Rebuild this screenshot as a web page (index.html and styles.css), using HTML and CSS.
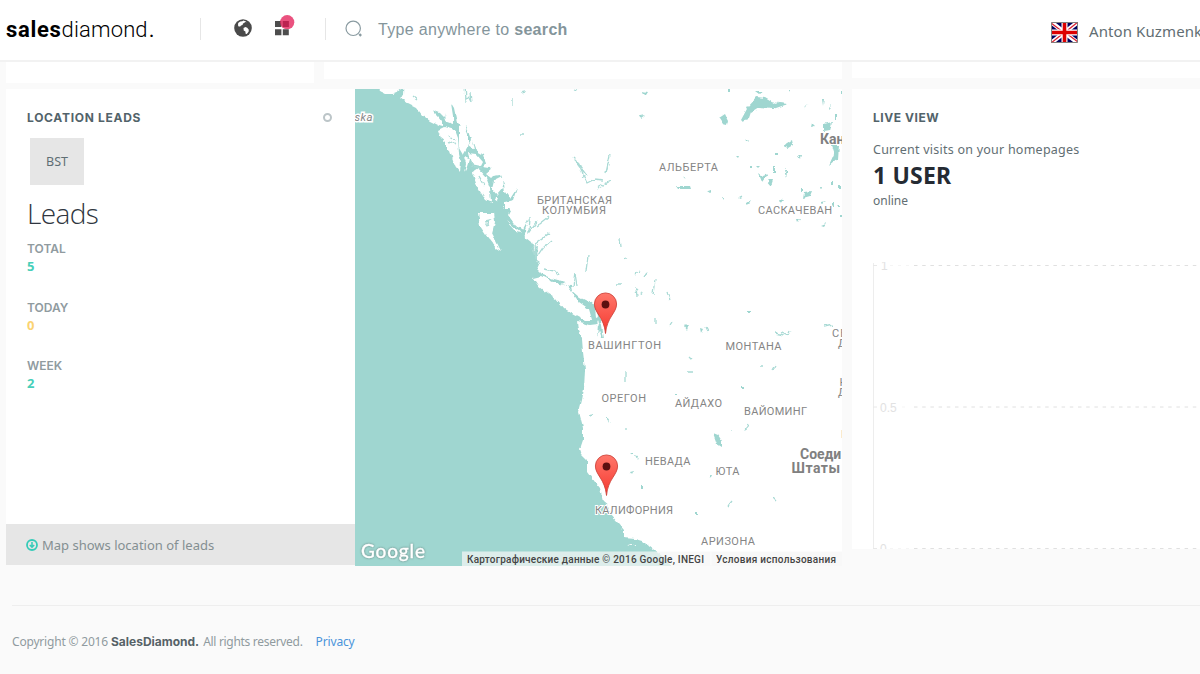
FILE: index.html
```html
<!DOCTYPE html>
<html lang="en">
<head>
<meta charset="utf-8">
<title>SalesDiamond</title>
<link rel="stylesheet" href="styles.css">
</head>
<body>
<header class="topbar">
  <div class="logo"><b>sales</b><span class="logo-light">diamond</span><span class="logo-dot">.</span></div>
  <i class="divider divider-first"></i>
  <svg class="globe" width="18" height="18" viewBox="0 0 18 18"><circle cx="9" cy="9" r="8.8" fill="#4a4a4a"/><path d="M4.2 4.1 6.2 2.6 8.3 2.2 9.5 1.5 11.8 2.4 12.6 3.3 11 3 10.5 3.8 9 4.5 8.5 6 7 6.5 6.2 7.6 4.6 7.4 4 6.2Z M9.5 9 11.5 8.1 13.2 8.8 14.8 10.8 14.6 12.8 12.8 15.1 11.6 14.7 11.4 12.6 9.7 11.6Z" fill="#fff"/></svg>
  <svg class="apps" width="22" height="24" viewBox="0 0 22 24"><path d="M1 7h6.400v6H1zM8.800 7h6v6h-6zM1 15.200h6.400v6H1zM8.800 15.200h6v6h-6z" fill="#4d4d4d"/><circle cx="13.200" cy="8.200" r="7.100" fill="#e5275f" fill-opacity=".8"/><path d="M8.800 7h6v6h-6z" fill="#b8204f" opacity=".8"/></svg>
  <i class="divider divider-second"></i>
  <svg class="lens" width="20" height="20" viewBox="0 0 20 20" fill="none" stroke="#8a9ba1"><circle cx="8.200" cy="8.300" r="7.200" stroke-width="1.200"/><path d="m14.300 14 1.800 1.800" stroke-width="2.400"/></svg>
  <div class="search">Type anywhere to <b>search</b></div>
  <div class="user">
    <svg class="flag" width="27" height="21" viewBox="0 0 27 21"><path d="M0 0h27v21H0z" fill="#00005f"/><path d="m0 0 27 21M27 0 0 21" stroke="#fff" stroke-width="4.500"/><path d="m0 1 12 9M27 0 15 9.500M27 20 15 11M0 21l12-9.500" stroke="#dc1f2e" stroke-width="1.300"/><path d="M13.500 0v21M0 10.500h27" stroke="#fff" stroke-width="6"/><path d="M13.500 0v21M0 10.500h27" stroke="#dc0000" stroke-width="3.600"/><path d="M.5.5h26v20H.5z" fill="none" stroke="#808080"/></svg>
    <span class="user-name">Anton Kuzmenko</span>
  </div>
</header>

<main class="board">
  <div class="row row-top">
    <div class="stub stub-a"></div><div class="stub stub-b"></div><div class="stub stub-c"></div>
  </div>
  <div class="row">
    <section class="location">
      <div class="location-body">
        <div class="card-head"><h2 class="title loc-title">LOCATION LEADS</h2><i class="ring"></i></div>
        <button class="bst">BST</button>
        <h3 class="leads">Leads</h3>
        <dl class="stats">
          <div class="stat"><dt>TOTAL</dt><dd class="green">5</dd></div>
          <div class="stat"><dt>TODAY</dt><dd class="yellow">0</dd></div>
          <div class="stat"><dt>WEEK</dt><dd class="green">2</dd></div>
        </dl>
      </div>
      <div class="note">
        <svg width="12" height="12" viewBox="0 0 12 12" fill="none" stroke="#35cbb8" stroke-width="1.800"><circle cx="6" cy="6" r="5"/><path d="M6 3v5M3.800 6 6 8.200 8.200 6" stroke-width="1.500"/></svg>
        <span>Map shows location of leads</span>
      </div>
    </section>
    <svg class="map" viewBox="355 89 487.500 476.500">
      <defs>
        <linearGradient id="pinFill" x1="0" y1="0" x2="0" y2="1"><stop offset="0" stop-color="#ff776b"/><stop offset="1" stop-color="#f5382f"/></linearGradient>
        <filter id="rough" filterUnits="userSpaceOnUse" x="340" y="75" width="520" height="505"><feTurbulence type="fractalNoise" baseFrequency=".17" numOctaves="2" seed="4"/><feDisplacementMap in="SourceGraphic" scale="4.500" xChannelSelector="R" yChannelSelector="G"/></filter>
      </defs>
      <path class="land" d="M354 89h489v477H354z"/>
      <g filter="url(#rough)">
      <path class="water" d="M340 75H372L380 91 386 94 393 94 398 92 402 89V75H405L404 94 400 97 408 103 416 107 422 115 430 121 438 125 442 126 442 121 438 116 432 110 440 113 445 118 444 113 447 122 453 124 453 116 451 103 454 108 457 122 461 126 464 132 465 126 468 131 471 140 468 145 475 150 473 140 477 151 484 155 486 164 483 167 490 168 493 176 500 175 504 184 505 192 510 199 517 188 513 200 505 202 505 209 511 209 508 215 516 226 523 230 530 217 525 230 526 238 531 242 534 252 538 243 537 260 540 262 537 269 543 275 554 279 566 282 560 284 571 286 572 291 579 297 589 302 593 303 599 314 602 326 604 339 602 339 599 329 597 337 598 324 590 325 577 321 578 330 582 339 583 352 585 369 584 389 582 400 579 412 583 427 583 440 580 449 582 455 587 460 587 471 595 482 600 488 603 502 609 507 611 515 618 523 624 530 624 538 635 539 642 541 649 546 658 553 667 560 680 580H340Z"/>
      <g class="land">
        <path d="M438 130 444 127 455 130 458 138 459 153 461 162 460 171 454 163 450 151 446 149 446 142 441 138Z"/>
        <path d="M459 127 464 125 468 134 468 145 463 154 459 147Z"/>
        <path d="M464 157 469 159 466 169 464 173 466 163Z M468 153 476 154 483 162 481 166 471 164Z"/>
        <path d="M472 172 478 168 486 177 490 188 491 202 485 199 481 193 477 186Z M494 181 502 177 503 188 497 195 492 189Z M492 169 498 171 491 178 486 174Z"/>
        <path d="M478 213 494 213 495 221 492 233 501 251 496 248 486 235 480 226Z M506 221 521 233 516 232Z"/>
        <path d="M533 278 541 276 555 283 568 286 574 295 579 302 589 309 592 320 584 320 573 314 564 309 556 299 548 294 539 287Z"/>
        <path d="M595 308 598 317 596 318ZM597 319 600 325 598 327ZM496 197l3 0-1 5-3-1ZM502 206l2 0 0 3ZM628 545l3 0 0 1ZM633 545l3 0 0 1Z"/>
      </g>
      <path class="hole" d="m485 222 5-1-3 4Z M449 136l7 4M448 141l8 4M472 166l10 2M479 177l5 9"/>
      <g class="water-line">
        <path d="m465 85 1 16 3-3 2 4-1-10M413 97l4 3M521 93l4-1M520 134h4M574 89l3 1M574 158l5 5 4 12 4 8 8-4 8 1M576 161l11 15M610 155l-4 18M611 180l-14 8M620 238l1 10M513 98v8M546 246l6-5M530 217l-1 15 8-11M536 227l13-10M541 240l8-7M532 244l4 14 8-12 5-2M543 269l12 2 3 4M573 287l2-14 2 13M536 258l-1-15 15-10M615 284h6M624 260l3-1M588 256l-2 15M635 275l5-4M647 272l-3 4M655 279l-2 15M634 292l4-4M636 287l1 10M667 292l3 8M655 317v7"/>
        <path d="M625 371v10M588 415l5-1M606 418l4 5M626 427v3M670 325l2-3M780 331l8 4 2-5M775 333l9 2M706 327l2 4M688 372h5M760 367h3M689 357l3 3M773 370l3-5M824 327l9-2M745 431l3-7M728 506l4-5M773 498l3 3"/>
      </g>
      <g class="water">
        <path d="m741 120 7-13 9-10 8 1 10 6 13 0-15 5-14-1-8 5-2 6-7 2Z"/>
        <path d="m719 118 6-4 3 6-1 5-4-1ZM783 146l9-6 1 5-5 3ZM824 124l8-2-2 9-6 1ZM831 145h8l-1 14-9 7 5-11ZM804 192l8-1-2 5-7 2ZM676 186l15 0 1 3-14 0ZM746 139l4 4-5-2ZM758 172l5 4 5-2-6 8ZM770 102l18 2-5 1ZM642 91l6 1-2 3ZM640 116l5-1-4 3ZM755 91h8l-4 3ZM713 433l5 2 4 6 0 6-5-3ZM709 475h3l-2 4ZM731 431l2-2v2ZM684 326l5-1-2 5ZM630 472l4-1-2 4ZM635 456l3 1-1 3ZM629 453h3v2ZM700 328l3 1-2 4ZM683 178l3-1-1 3Z"/>
        <path d="m779 199 4 1-3 4ZM746 203l5-3-3 5ZM798 156l3 0-1 3ZM803 110l4-6-3 3 5-2-3 1ZM829 107l2-2-1 5ZM822 99h2l-1 7ZM789 90h2l-2 4ZM737 156h3l-1 2ZM756 166l4 0-2 2ZM767 180l5 6 2-6M785 170l2-2v9ZM821 202l4-1-4 3ZM822 225l5-2-2 3ZM837 206l2-2v4ZM797 220h3l-2 3ZM819 186h2l-1 3ZM812 123l3 3-4 1ZM739 198l4-2-2 3ZM722 197h2v3ZM708 191l3-1v3ZM640 294l4-2-2 3Z"/>
        <path d="M729 89h2v3h-2zM773 166h2v6h-2zM835 115h2v4h-2zM831 181h2v3h-2zM838 186h3v3h-3zM748 311h2v2h-2zM741 386h3v3h-3zM675 394h2v1h-2zM841 91h2v4h-2zM840 214h3v3h-3zM750 167h2v2h-2zM776 153h3v2h-3zM801 188h2v3h-2zM832 203h2v3h-2zM641 486h2v2h-2zM695 513h2v2h-2z"/>
      </g>
      </g>
      <g class="region">
        <text x="659" y="171" textLength="60">АЛЬБЕРТА</text>
        <text x="537" y="203.500" textLength="76">БРИТАНСКАЯ</text>
        <text x="542" y="213.500" textLength="65">КОЛУМБИЯ</text>
        <text x="758" y="214" textLength="75">САСКАЧЕВАН</text>
        <text x="588" y="349" textLength="74">ВАШИНГТОН</text>
        <text x="725.500" y="350" textLength="57">МОНТАНА</text>
        <text x="601.500" y="402" textLength="45.500">ОРЕГОН</text>
        <text x="675" y="406.500" textLength="48">АЙДАХО</text>
        <text x="744" y="414.500" textLength="64">ВАЙОМИНГ</text>
        <text x="645" y="465" textLength="46.500">НЕВАДА</text>
        <text x="715.500" y="475" textLength="25">ЮТА</text>
        <text x="595" y="514" textLength="79">КАЛИФОРНИЯ</text>
        <text x="701" y="544.500" textLength="55">АРИЗОНА</text>
        <text x="832" y="336.500">СЕ</text>
        <text x="838" y="347">Д</text>
        <text x="839.500" y="385.500">Ю</text>
        <text x="838" y="396">Д</text>
        <text x="841" y="438">К</text>
      </g>
      <g class="country"><text x="820" y="143.500">Кан</text><text x="800" y="459">Соеди</text><text x="791.500" y="473" textLength="48.500">Штаты</text></g>
      <text class="sea" x="354.500" y="120.500" textLength="18">ska</text>
      <path class="pin" d="M605.500 333.500C604 317 594.400 313 594.400 304A11.100 11.100 0 0 1 616.600 304C616.600 313 607 317 605.500 333.500Z"/><circle cx="605.500" cy="304.500" r="3.900" class="pin-dot"/>
      <path class="pin" transform="translate(1 162)" d="M605.500 333.500C604 317 594.400 313 594.400 304A11.100 11.100 0 0 1 616.600 304C616.600 313 607 317 605.500 333.500Z"/><circle cx="606.500" cy="466.500" r="3.900" class="pin-dot"/>
      <text class="google" x="361" y="557.500" textLength="64">Google</text>
      <path d="M462 551.500H843V566H462Z" fill="#f5f5f5" fill-opacity=".72"/><path d="M711 551.500v14" stroke="#fff" opacity=".7"/>
      <g class="credit"><text x="467" y="562.500" textLength="237">Картографические данные © 2016 Google, INEGI</text><text x="716" y="562.500" textLength="120">Условия использования</text></g>
    </svg>
    <section class="live">
      <h2 class="title live-title">LIVE VIEW</h2>
      <p class="visits">Current visits on your homepages</p>
      <p class="users">1 USER</p>
      <p class="online">online</p>
      <svg class="chart" width="327" height="287" viewBox="0 0 327 287">
        <path d="M.5 1v286" stroke="#ededed"/>
        <path d="M41 3.500H327M41 145H327M41 286.500H327" stroke="#e0e0e0" stroke-dasharray="3.500 4.700"/>
        <path d="M0 3.500H4M0 145H4M0 286.500H4" stroke="#e8e8e8"/>
        <path d="M17 3.500H37M29 145H37M17 286.500H37" stroke="#f5f5f5" stroke-dasharray="3 5"/>
        <text x="8" y="8">1</text><text x="7" y="149.500">0.5</text><text x="7" y="291">0</text>
      </svg>
    </section>
  </div>
</main>
<footer class="foot"><span class="copy">Copyright © 2016</span><b class="brand">SalesDiamond.</b><span class="rights">All rights reserved.</span><a class="privacy">Privacy</a></footer>
</body>
</html>
```
FILE: styles.css
```css
* { box-sizing: border-box; }
body { margin: 0; width: 1200px; height: 674px; overflow: hidden; background: #fafafa; color: #626e73; font-family: "Noto Sans", "Open Sans", sans-serif; }
h2, h3, p, dl, dd { margin: 0; }
.topbar { height: 62px; background: #fff; border-bottom: 2px solid #f2f2f2; display: flex; align-items: flex-start; overflow: hidden; }
.logo { width: 149px; flex: none; margin: 16px 0 0 6px; font: 22px/28px Roboto, sans-serif; color: #000; white-space: nowrap; }
.logo b { letter-spacing: .7px; }
.logo-light { font-weight: 300; letter-spacing: .15px; }
.logo-dot { font-weight: 400; margin-left: 1px; }
.divider { width: 1px; height: 22px; margin-top: 18px; background: #e6e6e6; flex: none; }
.divider-first { margin-left: 45px; }
.divider-second { margin-left: 30px; }
.globe { margin: 19px 0 0 33px; flex: none; }
.apps { margin: 14px 0 0 22px; flex: none; }
.divider-second { margin-left: 29px; }
.lens { margin: 20px 0 0 19px; flex: none; }
.search { margin: 19px 0 0 13px; font: 16px/22px "Liberation Sans", sans-serif; color: #84959b; white-space: nowrap; letter-spacing: .32px; width: 192px; flex: none; }
.user { display: flex; margin: 22px 0 0 481px; white-space: nowrap; flex: none; }
.flag { flex: none; }
.user-name { margin: -2px 0 0 11px; font-size: 15px; line-height: 22px; letter-spacing: .1px; }
.row { display: flex; align-items: flex-start; padding-left: 6px; }
.row-top { height: 27px; }
.stub { background: #fff; flex: none; }
.stub-a { width: 308px; height: 21px; margin-right: 10px; }
.stub-b { width: 518px; height: 17px; margin-right: 10px; }
.stub-c { width: 348px; height: 16px; }
.location { width: 348.5px; height: 476px; background: #fff; display: flex; flex-direction: column; flex: none; }
.location-body { flex: 1; padding: 20px 23px 0 21px; }
.card-head { display: flex; justify-content: space-between; align-items: center; }
.title { font: 700 12px/17px Inter, sans-serif; color: #52636a; white-space: nowrap; letter-spacing: .7px; }
.live-title { letter-spacing: .55px; }
.ring { width: 9px; height: 9px; border: 2px solid #bcc5c8; border-radius: 50%; }
.bst { display: block; width: 54px; height: 47px; margin: 12px 0 0 3px; padding: 1px 0 0; border: 0; background: #e6e6e6; font: 12.5px/20px "Noto Sans", sans-serif; color: #5f6e74; }
.leads { margin-top: 8px; font: 300 28px/40px "Open Sans", sans-serif; letter-spacing: -.6px; color: #2f3640; }
.stats { margin-top: 7px; }
.stat { height: 58.5px; }
.stat dt, .stat dd { font: 600 12px/18px Inter, sans-serif; color: #909b9f; }
.stat dd { font: 700 13px/17px "Noto Sans", sans-serif; }
.stat .green { color: #48cfb9; }
.stat .yellow { color: #fbd372; }
.note { height: 41px; padding-left: 20px; background: #e6e6e6; display: flex; align-items: center; gap: 4px; font-size: 13px; color: #848f92; white-space: nowrap; }
.map { width: 487.5px; height: 476.5px; flex: none; display: block; }
.land { fill: #fff; }
.water { fill: #9fd6d0; }
.hole, .water-line { fill: none; stroke: #a9dad5; stroke-width: 1.3; }
.region { font: 11px Roboto, sans-serif; fill: #858585; stroke: #fff; stroke-width: 2px; paint-order: stroke; letter-spacing: 1px; }
.country { font: 700 14px Roboto, sans-serif; fill: #808080; }
.sea { font: italic 11.5px Roboto, sans-serif; fill: #888; stroke: #fff; stroke-width: 3px; paint-order: stroke; }
.pin { fill: url(#pinFill); stroke: #c93c34; stroke-width: .8; }
.pin-dot { fill: #5c1010; }
.google { font: 500 19px Lato, sans-serif; fill: #fff; stroke: #fff; stroke-width: .3px; filter: drop-shadow(0 0 1px #66837f); }
.credit { font: 500 10px Roboto, sans-serif; fill: #444; }
.live { width: 348px; height: 460px; margin-left: 10px; padding: 20px 0 0 21px; background: #fff; overflow: hidden; flex: none; }
.visits { margin-top: 14px; font-size: 12.5px; line-height: 19px; letter-spacing: .24px; white-space: nowrap; }
.users { font-size: 23px; font-weight: 700; line-height: 33px; height: 34px; letter-spacing: .2px; color: #252b33; }
.online { font-size: 12px; line-height: 16px; }
.chart { display: block; margin-top: 53px; font: 12px "Liberation Sans", sans-serif; fill: #e2e2e2; }
.foot { margin: 39.5px 0 0 12px; border-top: 1.5px solid #eeeeee; padding-top: 26.5px; display: flex; font-size: 12px; line-height: 18px; color: #909b9f; white-space: nowrap; }
.copy { letter-spacing: -.19px; }
.brand { margin-left: 3px; font: 700 12px/18px Inter, sans-serif; color: #566267; }
.rights { margin-left: 4px; letter-spacing: -.3px; }
.privacy { margin-left: 13px; color: #4a94da; letter-spacing: -.15px; }
```
